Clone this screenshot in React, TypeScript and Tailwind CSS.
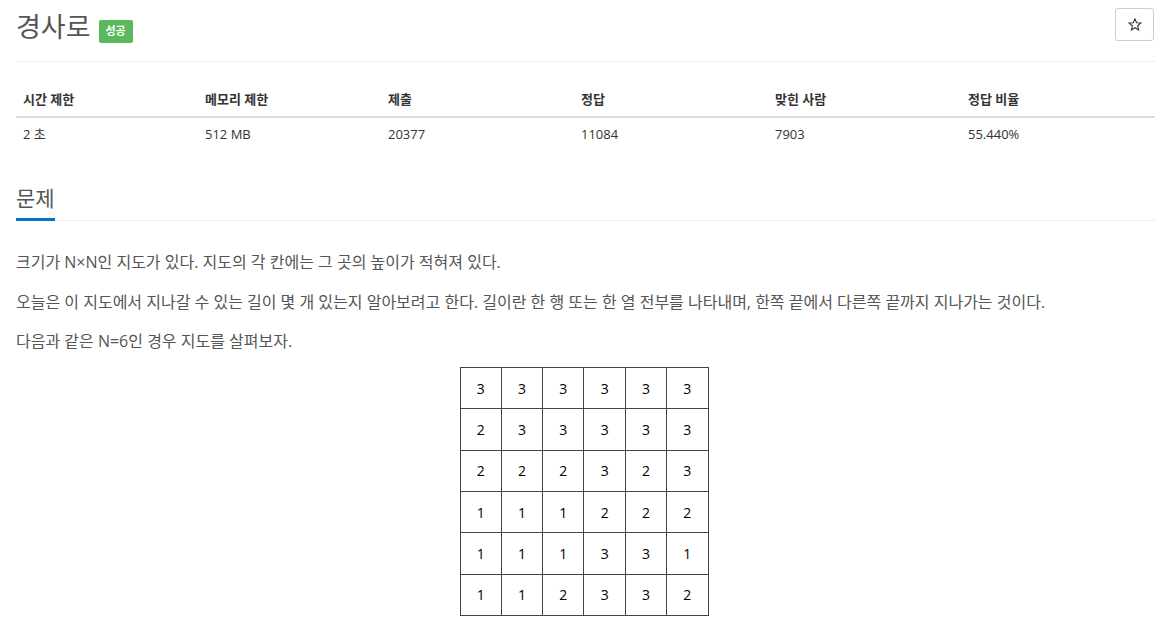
import React from 'react'

const font = { fontFamily: '"Open Sans", "Noto Sans CJK KR", sans-serif' }

const stats = [
  { label: '시간 제한', value: '2 초', w: 'w-[182px]' },
  { label: '메모리 제한', value: '512 MB', w: 'w-[183px]' },
  { label: '제출', value: '20377', w: 'w-[193px]' },
  { label: '정답', value: '11084', w: 'w-[194px]' },
  { label: '맞힌 사람', value: '7903', w: 'w-[193px]' },
  { label: '정답 비율', value: '55.440%', w: '' },
]

const grid = [
  [3, 3, 3, 3, 3, 3],
  [2, 3, 3, 3, 3, 3],
  [2, 2, 2, 3, 2, 3],
  [1, 1, 1, 2, 2, 2],
  [1, 1, 1, 3, 3, 1],
  [1, 1, 2, 3, 3, 2],
]

function StarOutline() {
  return (
    <svg width="14" height="13" viewBox="0 0 24 23" fill="none">
      <polygon
        points="12,1.5 14.9,8.4 22.5,8.9 16.7,13.8 18.5,21.2 12,17.2 5.5,21.2 7.3,13.8 1.5,8.9 9.1,8.4"
        stroke="#333"
        strokeWidth="1.9"
        strokeLinejoin="miter"
      />
    </svg>
  )
}

export default function App() {
  return (
    <div className="min-h-screen bg-white pl-4 pr-[10px] text-[#555]" style={font}>
      <div className="flex h-[62px] items-start justify-between border-b border-[#eee]">
        <div className="flex items-center pt-[9px]">
          <h1 className="text-[27px] leading-[36px] font-normal text-[#555]">경사로</h1>
          <span className="ml-[8px] mt-[9px] flex h-[23px] w-[34px] items-center justify-center rounded-[2px] bg-[#5cb85c] text-[11px] font-bold text-white">
            성공
          </span>
        </div>
        <button className="mt-[8px] mr-px flex h-[33px] w-[39px] items-center justify-center rounded-[3px] border border-[#ccc] bg-white">
          <StarOutline />
        </button>
      </div>

      <table className="mt-[20px] w-full border-collapse text-[13px] text-[#333]">
        <thead>
          <tr>
            {stats.map(s => (
              <th key={s.label} className={`${s.w} border-b-2 border-[#ddd] px-[7px] pt-[8px] pb-[8px] text-left leading-[18px] font-bold`}>
                {s.label}
              </th>
            ))}
          </tr>
        </thead>
        <tbody>
          <tr>
            {stats.map(s => (
              <td key={s.label} className="px-[7px] pt-[7px] pb-[8px] leading-[18px]">
                {s.value}
              </td>
            ))}
          </tr>
        </tbody>
      </table>

      <div className="mt-[32px] border-b border-[#eee]">
        <h2 className="-mb-px inline-block border-b-[3px] border-[#0076c0] pb-[5px] text-[21px] leading-[30px] font-normal text-[#555]">
          문제
        </h2>
      </div>

      <div className="mt-[29px] text-[16px] leading-[24px] text-[#555]">
        <p className="mb-[15.5px]">크기가 N×N인 지도가 있다. 지도의 각 칸에는 그 곳의 높이가 적혀져 있다.</p>
        <p className="mb-[15.5px]">
          오늘은 이 지도에서 지나갈 수 있는 길이 몇 개 있는지 알아보려고 한다. 길이란 한 행 또는 한 열 전부를 나타내며, 한쪽 끝에서 다른쪽 끝까지 지나가는 것이다.
        </p>
        <p className="mb-[14px]">다음과 같은 N=6인 경우 지도를 살펴보자.</p>
      </div>

      <div className="flex justify-center">
        <table className="mr-[3px] h-[249px] w-[249px] border-collapse border border-[#444] text-[14px] text-black">
          <tbody>
            {grid.map((row, i) => (
              <tr key={i}>
                {row.map((v, j) => (
                  <td key={j} className="h-[41px] w-[41px] border border-[#444] text-center">
                    {v}
                  </td>
                ))}
              </tr>
            ))}
          </tbody>
        </table>
      </div>
    </div>
  )
}
